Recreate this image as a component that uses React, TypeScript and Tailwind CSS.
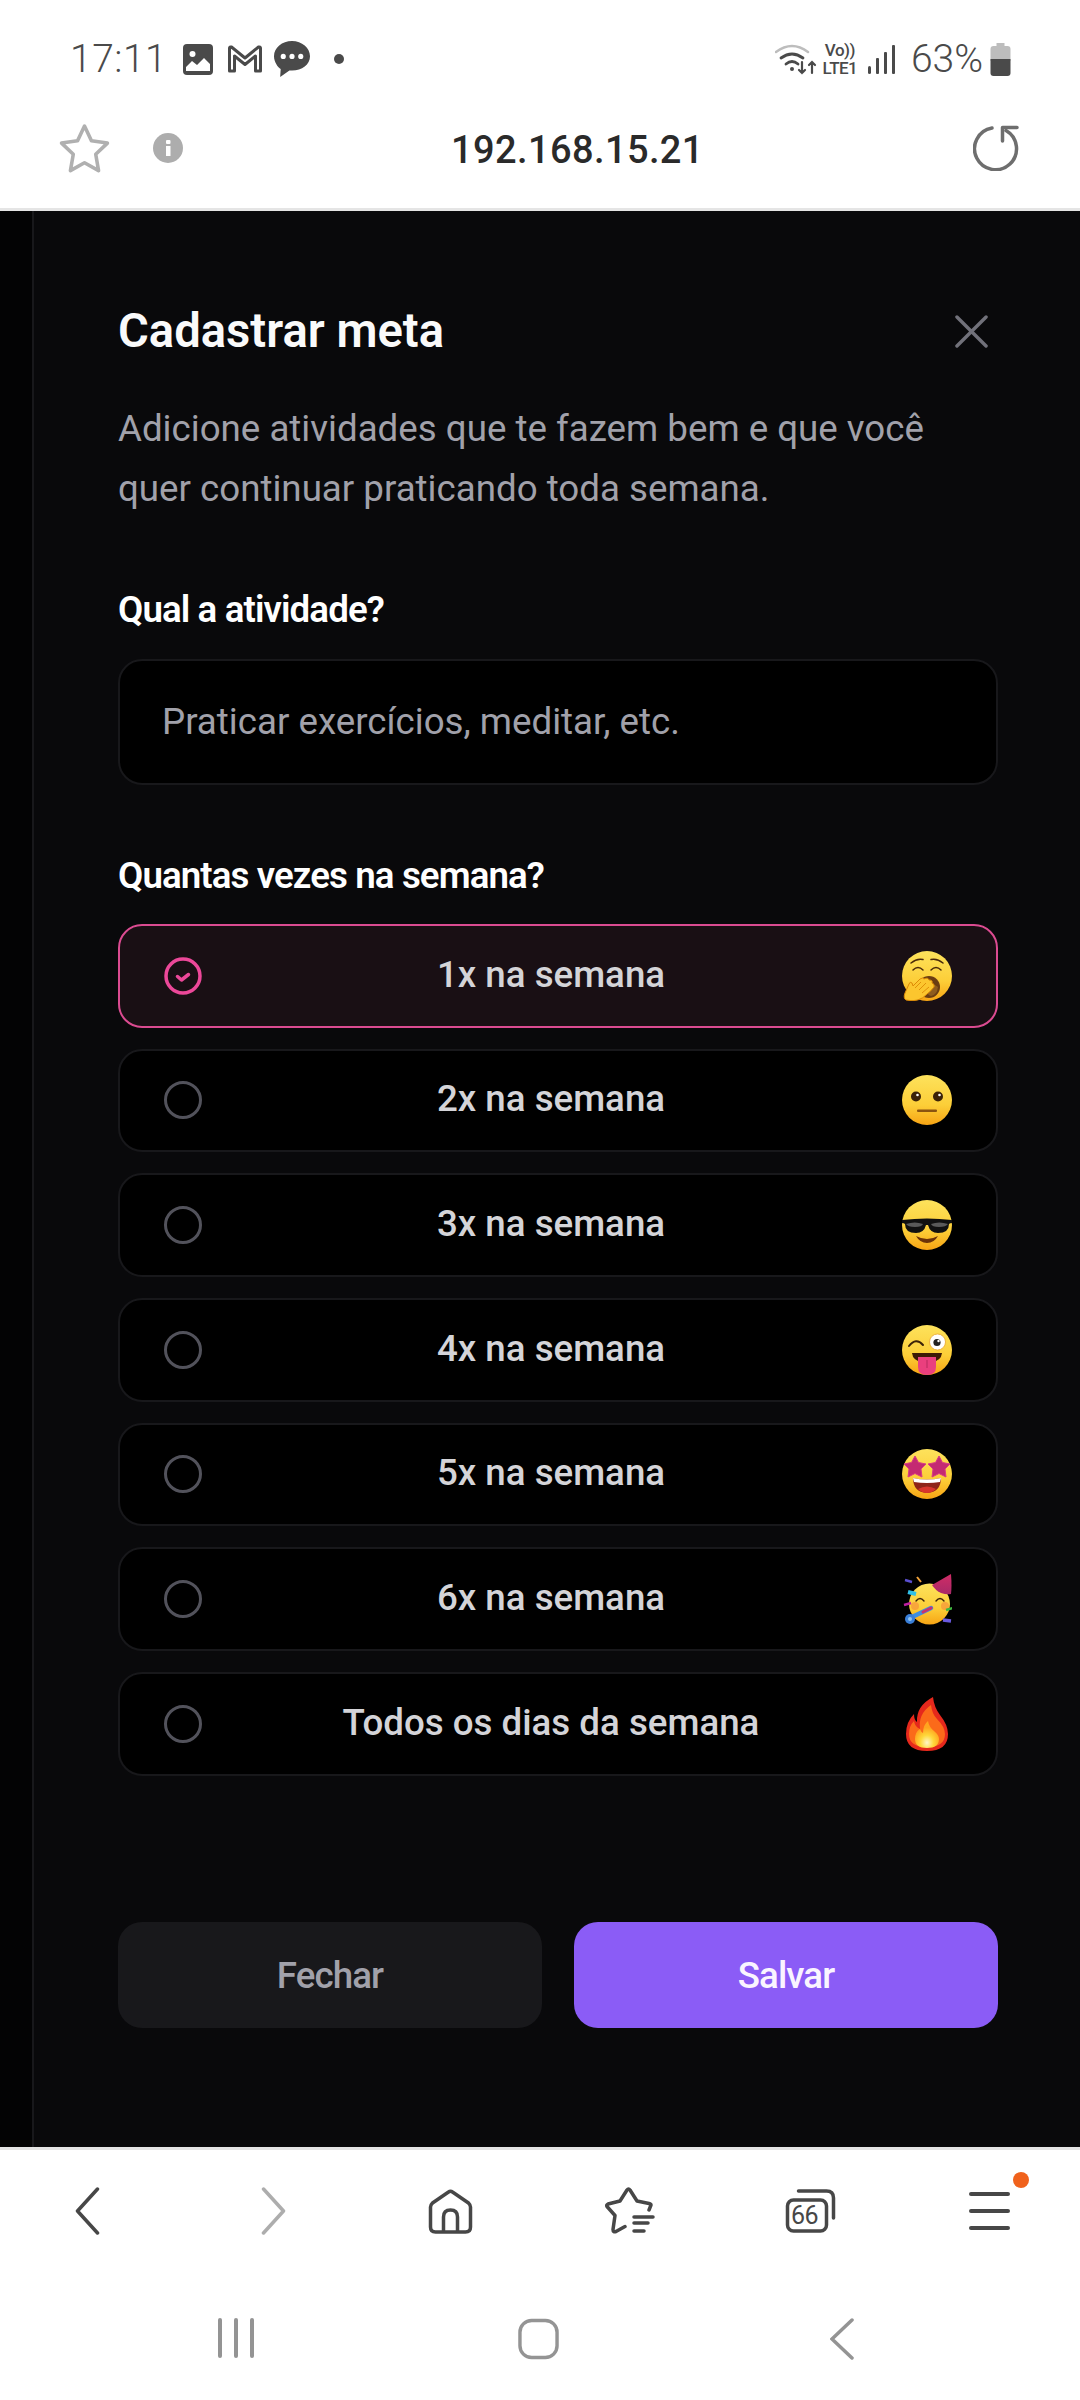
import type { ReactNode } from "react";

// Emoji are drawn by hand: no colour emoji font is available in the sandbox.
function Face({ id, children }: { id: string; children?: ReactNode }) {
  return (
    <svg viewBox="0 0 50 50" className="h-[50px] w-[50px] shrink-0">
      <defs>
        <linearGradient id={id} x1="0" y1="0" x2="0" y2="1">
          <stop offset="0%" stopColor="#fde25c" />
          <stop offset="60%" stopColor="#fcce38" />
          <stop offset="100%" stopColor="#f7a414" />
        </linearGradient>
      </defs>
      <circle cx="25" cy="25" r="25" fill={`url(#${id})`} />
      {children}
    </svg>
  );
}

function Yawn() {
  return (
    <Face id="yawn">
      <g fill="none" stroke="#4a2a0a" strokeWidth="1.500" strokeLinecap="round">
        <path d="M9 12q6-5 12-3.500M29 8.500q6-1.500 12 3.500" />
        <path d="M11 19q5-5 10 0M29 19q5-5 10 0" />
      </g>
      <circle cx="27" cy="36" r="11" fill="#6b3d12" />
      <path d="M24 35q7-4 12 1q-1 8-7 9q-5-1-5-10z" fill="#8f5c1e" />
      <path
        d="M4 49q-3-2-1-7l4-9q1-3 3-1l1 3l7-7q3-2 4 0q4-2 5 1q4 0 3 3q3 1 2 4q-3 4-7 7q-8 9-21 6z"
        fill="#fcc62e"
        stroke="#dd8a06"
        strokeWidth="1"
      />
      <path d="M19 31l-6 6M24 32l-7 7M27 36l-7 6" fill="none" stroke="#dd8a06" strokeWidth="0.900" />
    </Face>
  );
}

function Neutral() {
  return (
    <Face id="neutral">
      <circle cx="14" cy="21.500" r="5" fill="#3c2208" />
      <circle cx="36" cy="21.500" r="5" fill="#3c2208" />
      <circle cx="15.500" cy="20" r="1.300" fill="#fff" />
      <circle cx="37.500" cy="20" r="1.300" fill="#fff" />
      <rect x="15" y="34.500" width="20" height="2.400" rx="1" fill="#8a5310" />
    </Face>
  );
}

function Sunglasses() {
  return (
    <Face id="cool">
      <path d="M0 20q25-3 50 0v3q-2 0-3 1q0 9-11 9q-8 0-10-8h-2q-2 8-10 8q-11 0-11-9q-1-1-3-1z" fill="#111" />
      <path d="M4 24q9-3 17 0q-1 3-8 3q-7 0-9-3zM29 24q8-3 17 0q-2 3-9 3q-7 0-8-3z" fill="#5a5a5a" />
      <path d="M14 36q11 6 22 0q-4 7-11 7t-11-7z" fill="#6b3208" />
    </Face>
  );
}

function Wink() {
  return (
    <Face id="wink">
      <path d="M7 21q7-9 14-1" fill="none" stroke="#3c2208" strokeWidth="2" strokeLinecap="round" />
      <circle cx="35.500" cy="17" r="8" fill="#fff" stroke="#e8a52a" strokeWidth="0.800" />
      <circle cx="35" cy="17.500" r="3.600" fill="#222" />
      <circle cx="36.500" cy="16" r="1.200" fill="#fff" />
      <path d="M10 28h30q-1 8-10 9h-10q-9-1-10-9z" fill="#3c1a06" />
      <path d="M16 32h18v10q0 8-9 8t-9-8z" fill="#ea3f7e" />
      <path d="M25 35v8" stroke="#b82a5e" strokeWidth="1" />
    </Face>
  );
}

function StarEyes() {
  return (
    <Face id="stars">
      <path
        d="M13 7l3.500 6.500l7.500 1.500l-5 5l1 8l-7-3.500l-7 3.500l1-8l-5-5l7.500-1.500z"
        fill="#c42a72"
        stroke="#d93a83"
        strokeWidth="1"
        strokeLinejoin="round"
      />
      <path
        d="M37 7l3.500 6.500l7.500 1.500l-5 5l1 8l-7-3.500l-7 3.500l1-8l-5-5l7.500-1.500z"
        fill="#c42a72"
        stroke="#d93a83"
        strokeWidth="1"
        strokeLinejoin="round"
      />
      <path d="M11 29q14 3 28 0q0 14-14 15q-14-1-14-15z" fill="#8f2418" />
      <path d="M11 29q14 3 28 0l-1 4q-13 2-26 0z" fill="#fff" />
      <path d="M16 40q9-5 18 0q-4 4-9 4t-9-4z" fill="#d8352c" />
    </Face>
  );
}

function Party() {
  return (
    <svg viewBox="0 0 50 52" className="h-[52px] w-[50px] shrink-0">
      <defs>
        <linearGradient id="party" x1="0" y1="0" x2="0" y2="1">
          <stop offset="0%" stopColor="#fde25c" />
          <stop offset="60%" stopColor="#fcce38" />
          <stop offset="100%" stopColor="#f7a414" />
        </linearGradient>
        <linearGradient id="hat" x1="0" y1="0" x2="0" y2="1">
          <stop offset="0%" stopColor="#d02c66" />
          <stop offset="100%" stopColor="#a82a68" />
        </linearGradient>
      </defs>
      <circle cx="27.500" cy="31" r="20.500" fill="url(#party)" />
      <path d="M30 12L49 1q1 12 0 20q-4 1-10-1q-6-3-9-8z" fill="url(#hat)" />
      <path d="M14 28q4-5 8 0M34 28q4-5 8 0" fill="none" stroke="#3c2208" strokeWidth="1.400" strokeLinecap="round" />
      <circle cx="13" cy="33" r="4" fill="#f58a3a" opacity="0.600" />
      <circle cx="43" cy="33" r="4" fill="#f58a3a" opacity="0.600" />
      <path d="M10 44l19-9" stroke="#3f8fe0" strokeWidth="4.500" strokeLinecap="round" />
      <path d="M21 39l8-4" stroke="#c9326e" strokeWidth="3" strokeLinecap="round" />
      <circle cx="8" cy="46" r="5" fill="#3a7fd8" />
      <circle cx="8" cy="46" r="2" fill="#8fc4f0" />
      <path d="M3 7l7 2" stroke="#5a4fd0" strokeWidth="2.500" />
      <path d="M6 19l8 2" stroke="#30c0e8" strokeWidth="4" />
      <path d="M15 4l4 5" stroke="#f4a43a" strokeWidth="2" />
      <path d="M2 32l7-2" stroke="#c020a0" strokeWidth="2.500" />
      <path d="M44 37l7-2" stroke="#40b840" strokeWidth="2.500" />
      <path d="M41 47l8 1" stroke="#6a5ae0" strokeWidth="3.500" />
    </svg>
  );
}

function Fire() {
  return (
    <svg viewBox="0 0 50 54" className="h-[54px] w-[50px] shrink-0">
      <defs>
        <radialGradient id="flame" cx="50%" cy="80%" r="55%">
          <stop offset="0%" stopColor="#fff6c8" />
          <stop offset="50%" stopColor="#ffd83a" />
          <stop offset="100%" stopColor="#ffa51f" />
        </radialGradient>
      </defs>
      <path d="M31 0q1 10 7 18q8 10 8 19q0 17-21 17T4 37q0-12 8-20q0 6 3 8q-1-16 16-25z" fill="#e5281c" />
      <path d="M29 8q1 9 6 14q8 8 8 15q0 13-18 13T7 37q0-8 5-13q1 6 6 8q-2-15 11-24z" fill="#fb6a1a" />
      <path d="M26 24q1 6 6 10q5 4 5 8q0 9-12 9t-12-9q0-7 5-10q1 3 3 4q0-8 5-12z" fill="url(#flame)" />
    </svg>
  );
}

const rows = [
  { label: "1x na semana", emoji: <Yawn /> },
  { label: "2x na semana", emoji: <Neutral /> },
  { label: "3x na semana", emoji: <Sunglasses /> },
  { label: "4x na semana", emoji: <Wink /> },
  { label: "5x na semana", emoji: <StarEyes /> },
  { label: "6x na semana", emoji: <Party /> },
  { label: "Todos os dias da semana", emoji: <Fire /> },
];

function StatusBar() {
  return (
    <div className="relative flex h-[104px] items-center pt-[14px] text-[#4a4a4a]">
      <span className="ml-[70px] text-[39px] font-light leading-none tracking-[0.5px]">17:11</span>
      {/* image */}
      <svg viewBox="0 0 30 31" className="ml-[16px] h-[31px] w-[30px]">
        <rect width="30" height="31" rx="4" fill="#4a4a4a" />
        <circle cx="9.500" cy="10" r="3" fill="#fff" />
        <path d="M3 27v-4l6-6l5 4l7-7l6 6v7z" fill="#fff" />
      </svg>
      {/* gmail */}
      <svg viewBox="0 0 35 28" className="ml-[14px] h-[28px] w-[36px]" fill="none" stroke="#4a4a4a" strokeWidth="3" strokeLinejoin="round">
        <path d="M2 26V3q0-1.500 2-1l13.500 11L31 2q2-.500 2 1v23h-5V11l-10.500 8.500L7 11v15z" />
      </svg>
      {/* chat */}
      <svg viewBox="0 0 35 35" className="ml-[11px] h-[36px] w-[36px]">
        <path d="M17.500 0C7.800 0 0 6.500 0 14.800c0 6 4 10.800 6.500 12.500L6 35l9-6.200h2.500c9.700 0 17.500-6 17.500-14S27.200 0 17.500 0z" fill="#4a4a4a" />
        <circle cx="9" cy="15" r="2.500" fill="#fff" />
        <circle cx="17.500" cy="15" r="2.500" fill="#fff" />
        <circle cx="26" cy="15" r="2.500" fill="#fff" />
      </svg>
      <span className="ml-[24px] h-[10px] w-[10px] rounded-full bg-[#4a4a4a]" />
      <div className="ml-auto mr-[69px] flex items-center">
        {/* wifi */}
        <svg viewBox="0 0 42 32" className="h-[32px] w-[42px]" fill="none" strokeLinecap="round">
          <path d="M1 9Q17-3 33 9" stroke="#bdbdbd" strokeWidth="2.500" />
          <path d="M6 15q11-8 22 0M11 21q6-5 12 0" stroke="#4a4a4a" strokeWidth="2.800" />
          <circle cx="17" cy="26" r="2" fill="#4a4a4a" />
          <path d="M27 19v11m-3-3l3 3l3-3M37 30V19m-3 3l3-3l3 3" stroke="#4a4a4a" strokeWidth="2.200" />
        </svg>
        <div className="ml-[4px] flex w-[38px] flex-col items-center text-[17px] font-medium leading-[18px]">
          <span className="tracking-[-0.5px]">Vo))</span>
          <span className="tracking-[-0.5px]">LTE1</span>
        </div>
        <svg viewBox="0 0 27 29" className="ml-[9px] h-[29px] w-[27px]" fill="#4a4a4a">
          <rect x="0" y="21" width="3" height="8" rx="1.500" />
          <rect x="8" y="13" width="3" height="16" rx="1" />
          <rect x="16" y="7" width="3" height="22" rx="1" />
          <rect x="24" y="0" width="3" height="29" rx="1" />
        </svg>
        <span className="ml-[16px] text-[39px] font-light leading-none">63%</span>
        <svg viewBox="0 0 20 33" className="ml-[7px] h-[33px] w-[21px]">
          <path d="M6 0h8v3h3q3 0 3 3v12H0V6q0-3 3-3h3z" fill="#bdbdbd" />
          <path d="M0 16h20v14q0 3-3 3H3q-3 0-3-3z" fill="#4a4a4a" />
        </svg>
      </div>
    </div>
  );
}

function UrlBar() {
  return (
    <div className="flex h-[107px] items-center border-b-[3px] border-[#e5e5e5] pb-[16px]">
      <svg viewBox="0 0 50 50" className="ml-[59px] h-[51px] w-[51px]" fill="none" stroke="#b0b0b0" strokeWidth="3.500" strokeLinejoin="round">
        <path d="M25 3l6.800 14.500l15.700 2.200l-11.500 11l2.800 16L25 39l-13.800 7.700l2.800-16l-11.500-11l15.700-2.200z" />
      </svg>
      <svg viewBox="0 0 30 30" className="ml-[43px] h-[30px] w-[30px]">
        <circle cx="15" cy="15" r="15" fill="#adadad" />
        <rect x="13" y="13" width="4.500" height="10" fill="#fff" />
        <rect x="13" y="7" width="4.500" height="4" rx="1" fill="#fff" />
      </svg>
      <span className="ml-[268px] mt-[3px] text-[38px] font-medium leading-none tracking-[0.4px] text-[#2a2a2a]">192.168.15.21</span>
      <svg viewBox="0 0 46 46" className="ml-auto mr-[61px] h-[46px] w-[46px]" fill="none" stroke="#6e6e6e" strokeWidth="3.500" strokeLinecap="round" strokeLinejoin="round">
        <path d="M19 3A21 21 0 1 0 33 5.500" />
        <path d="M44 2.500H29.500V16" />
      </svg>
    </div>
  );
}

function Radio({ checked }: { checked: boolean }) {
  if (checked) {
    return (
      <svg viewBox="0 0 38 38" className="h-[38px] w-[38px] shrink-0" fill="none" stroke="#ec4899" strokeWidth="3.500">
        <circle cx="19" cy="19" r="17" />
        <path d="M13.500 19.500l4 3.500l7-5.500" strokeLinecap="round" strokeLinejoin="round" />
      </svg>
    );
  }
  return <span className="h-[38px] w-[38px] shrink-0 rounded-full border-[3px] border-[#52525b]" />;
}

function BottomBar() {
  return (
    <div className="flex h-[126px] items-start border-t-[3px] border-[#e5e5e5]">
      <div className="relative flex w-full items-center pl-[75px] pt-[37px] text-[#474747]">
        <svg viewBox="0 0 24 48" className="h-[48px] w-[25px]" fill="none" stroke="#474747" strokeWidth="3.500" strokeLinecap="round" strokeLinejoin="round">
          <path d="M22 2L2 24l20 22" />
        </svg>
        <svg viewBox="0 0 24 48" className="ml-[161px] h-[48px] w-[25px]" fill="none" stroke="#adadad" strokeWidth="3.500" strokeLinecap="round" strokeLinejoin="round">
          <path d="M2 2l20 22L2 46" />
        </svg>
        <svg viewBox="0 0 44 45" className="ml-[142px] h-[45px] w-[45px]" fill="none" stroke="#474747" strokeWidth="3.500" strokeLinejoin="round">
          <path d="M2 18q0-2 2-4L20 3q2-1.500 4 0l16 11q2 2 2 4v20q0 5-5 5H7q-5 0-5-5z" />
          <path d="M15 43V28q0-7 7-7t7 7v15" />
        </svg>
        <svg viewBox="0 0 50 48" className="ml-[132px] h-[48px] w-[50px]" fill="none" stroke="#474747" strokeWidth="3.500" strokeLinecap="round" strokeLinejoin="round">
          <path d="M44 23l2-5q0-1-2-1.500L32 14L25 3q-1.500-2-3 0l-7 11l-12 3q-2 1-1 2.500l8 9l-2 14q0 3 3 2l9-5" />
          <path d="M29 30h19M29 36h14M29 44h10" />
        </svg>
        <div className="relative ml-[130px] h-[44px] w-[51px]">
          <svg viewBox="0 0 50 44" className="absolute inset-0 h-[44px] w-[51px]" fill="none" stroke="#474747" strokeWidth="3.500" strokeLinecap="round">
            <path d="M13 2h28q7 0 7 7v20" />
            <rect x="2" y="11" width="39" height="31" rx="6" />
          </svg>
          <span className="absolute left-[6px] top-[12px] text-[25px] leading-[30px] tracking-[-0.5px]">66</span>
        </div>
        <div className="relative ml-[133px] flex h-[38px] w-[41px] flex-col justify-between">
          <span className="h-[4px] rounded-full bg-[#474747]" />
          <span className="h-[4px] rounded-full bg-[#474747]" />
          <span className="h-[4px] rounded-full bg-[#474747]" />
          <span className="absolute right-[-19px] top-[-20px] h-[16px] w-[16px] rounded-full bg-[#f0621c]" />
        </div>
      </div>
    </div>
  );
}

function NavBar() {
  return (
    <div className="flex flex-1 items-start pt-[45px]">
      <svg viewBox="0 0 36 40" className="ml-[218px] h-[40px] w-[36px]" fill="#949494">
        <rect x="0" y="0" width="4" height="40" rx="2" />
        <rect x="16" y="0" width="4" height="40" rx="2" />
        <rect x="32" y="0" width="4" height="40" rx="2" />
      </svg>
      <svg viewBox="0 0 42 42" className="ml-[264px] h-[42px] w-[41px]" fill="none" stroke="#949494" strokeWidth="3.500">
        <rect x="2" y="2" width="38" height="38" rx="12" />
      </svg>
      <svg viewBox="0 0 24 42" className="ml-[271px] h-[42px] w-[24px]" fill="none" stroke="#949494" strokeWidth="3.500" strokeLinecap="round">
        <path d="M22 2L2 21l20 19" />
      </svg>
    </div>
  );
}

export default function App() {
  return (
    <div className="flex h-[2400px] w-[1080px] flex-col overflow-hidden bg-white font-['Roboto',sans-serif]">
      <StatusBar />
      <UrlBar />

      <div className="flex h-[1936px] bg-[#030304]">
        <div className="w-[32px]" />
        <div className="flex-1 border-l-[2px] border-[#18181b] bg-[#09090b] pl-[84px] pr-[82px] pt-[90px]">
          <div className="flex h-[60px] items-center justify-between">
            <h1 className="text-[47.200px] font-semibold leading-[60px] text-[#fafafa]">Cadastrar meta</h1>
            <svg viewBox="0 0 34 34" className="mr-[10px] h-[33px] w-[33px]" fill="none" stroke="#71717a" strokeWidth="3.500" strokeLinecap="round">
              <path d="M2 2l30 30M32 2L2 32" />
            </svg>
          </div>
          <p className="mt-[38px] w-[830px] text-[36.700px] leading-[60px] text-[#a1a1aa]">
            Adicione atividades que te fazem bem e que você quer continuar praticando toda semana.
          </p>

          <div className="mt-[69px] text-[36.700px] font-semibold leading-[44px] tracking-[-0.9px] text-white">Qual a atividade?</div>
          <div className="mt-[27px] flex h-[126px] items-center rounded-[24px] border-[2px] border-[#18181b] bg-black px-[42px] text-[36.700px] text-[#a1a1aa]">
            Praticar exercícios, meditar, etc.
          </div>

          <div className="mt-[69px] text-[36.700px] font-semibold leading-[44px] tracking-[-0.9px] text-white">Quantas vezes na semana?</div>
          <div className="mt-[26px] flex flex-col gap-[21px]">
            {rows.map((row, i) => (
              <div
                key={row.label}
                className={
                  i === 0
                    ? "flex h-[103.67px] items-center rounded-[24px] border-[2px] border-[#db4b91] bg-[#190f14] px-[44px]"
                    : "flex h-[103.67px] items-center rounded-[24px] border-[2px] border-[#18181b] bg-black px-[44px]"
                }
              >
                <Radio checked={i === 0} />
                <span className="mr-[2px] flex-1 pb-[3px] text-center text-[36.700px] font-medium text-[#d4d4d8]">{row.label}</span>
                {row.emoji}
              </div>
            ))}
          </div>

          <div className="mt-[146px] flex gap-[32px]">
            <button className="h-[106px] flex-1 rounded-[24px] bg-[#18181b] pt-[2px] text-[36.700px] font-medium tracking-[-0.9px] text-[#a1a1aa]">Fechar</button>
            <button className="h-[106px] flex-1 rounded-[24px] bg-[#8b5cf6] pt-[2px] text-[36.700px] font-medium tracking-[-0.9px] text-[#faf5ff]">Salvar</button>
          </div>
        </div>
      </div>

      <BottomBar />
      <NavBar />
    </div>
  );
}
